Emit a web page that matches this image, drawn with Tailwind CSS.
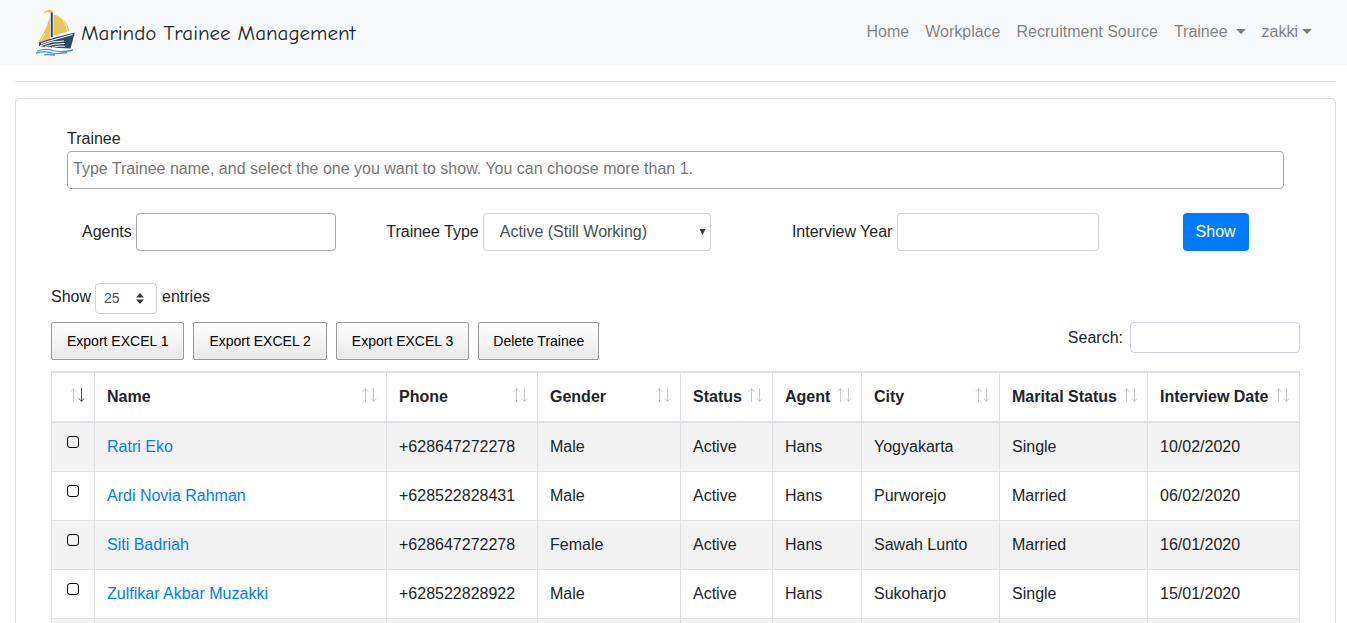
<!DOCTYPE html>
<html lang="en">
<head>
<meta charset="utf-8">
<meta name="viewport" content="width=device-width, initial-scale=1">
<title>Marindo Trainee Management</title>
<script src="https://cdn.jsdelivr.net/npm/@tailwindcss/browser@4"></script>
</head>
<body class="h-screen overflow-hidden bg-white font-['Liberation_Sans',Arial,sans-serif] text-base text-[#212529]">
<svg class="hidden" aria-hidden="true">
  <symbol id="sort" viewBox="0 0 15 20">
    <g fill="none" stroke="currentColor">
      <path stroke="#c6c8ca" d="M3.5 1.5V15M.8 4.6 3.5 1.6 6.2 4.6"/>
      <path d="M11.5 1V14.5M8.8 11.4 11.5 14.4 14.2 11.4"/>
    </g>
  </symbol>
</svg>

<nav class="flex h-[65px] items-center justify-between bg-[#f8f9fb] px-[35px]">
  <a href="#" class="flex items-center gap-[5px]">
    <svg class="h-[47px] w-[41px]" viewBox="0 0 41 47" aria-hidden="true">
      <path fill="#e8c65a" d="M15 5.500C14 14 9 23 3 34.500L15 31ZM18.500 5.500C27 7.500 33 13 34.500 22L18.500 27ZM8 5C9.500 2 12 .8 15.500 .5L19 3 15.500 4 12 2.800Z"/>
      <path fill="none" stroke="#f8f9fb" stroke-width=".8" d="M24 7.500C29 11 31.500 15 32.500 23M10 24 6 31.500"/>
      <path fill="#2f4a68" d="M15.800 3.500H17.800V28L15.800 28.500ZM4 33.500 20 28.500 39.800 23.500 35.500 39.500 14 38.500 4 37Z"/>
      <path fill="none" stroke="#f8f9fb" stroke-width="1.100" d="M6 34.500 18 31 37.500 25.500M5 36.800 17 33 29 32M10 37.500 20 35.200 30 34.500M17 38.500 23 37.200 30 37.200M3 39 16 38.500"/>
      <path fill="none" stroke="#4f8fcf" stroke-width="1.300" d="M2 42C8 40 13 40 18 41.500S30 43 38 41M1 44C7 42.500 12 42.500 17 44S26 44.500 32 43.500M9 46C12 45 16 45.500 20 46"/>
    </svg>
    <span class="font-['Comic_Sans_MS','Comic_Neue',Lato,sans-serif] text-[21px] leading-[30px]">Marindo Trainee Management</span>
  </a>
  <ul class="flex items-center gap-4 pb-[2px] text-black/50">
    <li><a href="#">Home</a></li>
    <li><a href="#">Workplace</a></li>
    <li><a href="#">Recruitment Source</a></li>
    <li><a href="#" class="flex items-center gap-2">Trainee <span class="border-x-5 border-t-5 border-x-transparent border-t-black/50"></span></a></li>
    <li><a href="#" class="flex items-center gap-1">zakki <span class="border-x-5 border-t-5 border-x-transparent border-t-black/50"></span></a></li>
  </ul>
</nav>

<main class="pt-4 pr-[11px] pl-[15px]">
  <hr class="mb-4 border-t border-black/10">
  <section class="rounded border border-[#dfdfdf] px-[35px] pt-7">
    <form class="px-4">
      <label for="trainee" class="block leading-6">Trainee</label>
      <input id="trainee" type="text" placeholder="Type Trainee name, and select the one you want to show. You can choose more than 1." class="block h-[38px] w-full rounded border border-[#aaa] px-[5px] pb-[2px] placeholder:text-[#777]">
      <div class="mt-6 grid grid-cols-12">
        <div class="col-span-3 flex items-center gap-1 pl-[15px]">
          <label for="agents">Agents</label>
          <input id="agents" type="text" class="h-[38px] w-[200px] rounded border border-[#aaa] px-2">
        </div>
        <div class="col-span-4 flex items-center gap-1 pl-[15px]">
          <label for="type">Trainee Type</label>
          <div class="relative">
            <select id="type" class="block h-[38px] w-[228px] appearance-none rounded border border-[#ced4da] bg-white pl-4 text-[#495057]">
              <option>Active (Still Working)</option>
            </select>
            <svg class="pointer-events-none absolute top-4 right-[5px] h-[6px] w-[7px]" viewBox="0 0 7 6" aria-hidden="true"><path fill="#343a40" d="M.5 0h6L3.500 6Z"/></svg>
          </div>
        </div>
        <div class="col-span-4 flex items-center gap-[5px] pl-[15px]">
          <label for="year">Interview Year</label>
          <input id="year" type="text" class="h-[38px] w-[202px] rounded border border-[#ced4da] px-3">
        </div>
        <div><button type="button" class="h-[38px] rounded bg-[#007bff] px-[13px] text-white">Show</button></div>
      </div>
    </form>

    <div class="mt-8 flex items-start leading-7">
      <label for="length" class="mr-1">Show</label>
      <div class="relative">
        <select id="length" class="block h-[31px] w-[62px] appearance-none rounded border border-[#ced4da] bg-white pb-[2px] pl-2 text-sm text-[#495057]">
          <option>25</option>
        </select>
        <svg class="pointer-events-none absolute top-[10px] right-[13px] h-[11px] w-2" viewBox="0 0 8 11" aria-hidden="true"><path fill="#343a40" d="M4 0 8 4.500H0ZM0 6.500H8L4 11Z"/></svg>
      </div>
      <span class="ml-[5px]">entries</span>
    </div>

    <div class="mt-2 flex items-start justify-between">
      <div class="flex gap-[9px] text-sm text-black">
        <button type="button" class="h-[38px] rounded-[2px] border border-[#999] bg-linear-to-b from-white to-[#e9e9e9] px-[15px]">Export EXCEL 1</button>
        <button type="button" class="h-[38px] rounded-[2px] border border-[#999] bg-linear-to-b from-white to-[#e9e9e9] px-[15px]">Export EXCEL 2</button>
        <button type="button" class="h-[38px] rounded-[2px] border border-[#999] bg-linear-to-b from-white to-[#e9e9e9] px-[15px]">Export EXCEL 3</button>
        <button type="button" class="h-[38px] rounded-[2px] border border-[#999] bg-linear-to-b from-white to-[#e9e9e9] px-[14px]">Delete Trainee</button>
      </div>
      <div class="flex items-center gap-[7px]">
        <label for="search">Search:</label>
        <input id="search" type="search" class="h-[31px] w-[170px] rounded border border-[#ced4da] px-2 text-sm">
      </div>
    </div>

    <table class="mt-[11px] w-full table-fixed border-separate border-spacing-0 border-t-2 border-l border-[#dee2e6] [&_td]:border-r [&_td]:border-b [&_td]:border-[#dee2e6] [&_td]:p-3 [&_th]:border-r [&_th]:border-b-2 [&_th]:border-[#dee2e6] [&_th]:py-3 [&_th]:pr-[9px] [&_th]:pl-3 [&_th]:text-left [&_th_svg]:h-5 [&_th_svg]:w-[15px] [&_th_svg]:shrink-0">
      <colgroup>
        <col class="w-[43px]"><col><col class="w-[151px]"><col class="w-[143px]"><col class="w-[92px]"><col class="w-[89px]"><col class="w-[138px]"><col class="w-[148px]"><col class="w-[152px]">
      </colgroup>
      <thead class="text-[#212529]">
        <tr>
          <th aria-label="Select"><div class="flex h-6 items-center justify-end"><svg class="text-[#3a5078]"><use href="#sort"/></svg></div></th>
          <th><div class="flex items-center justify-between">Name<svg class="text-[#c6c8ca]"><use href="#sort"/></svg></div></th>
          <th><div class="flex items-center justify-between">Phone<svg class="text-[#c6c8ca]"><use href="#sort"/></svg></div></th>
          <th><div class="flex items-center justify-between">Gender<svg class="text-[#c6c8ca]"><use href="#sort"/></svg></div></th>
          <th><div class="flex items-center justify-between">Status<svg class="text-[#c6c8ca]"><use href="#sort"/></svg></div></th>
          <th><div class="flex items-center justify-between">Agent<svg class="text-[#c6c8ca]"><use href="#sort"/></svg></div></th>
          <th><div class="flex items-center justify-between">City<svg class="text-[#c6c8ca]"><use href="#sort"/></svg></div></th>
          <th><div class="flex items-center justify-between whitespace-nowrap">Marital Status<svg class="text-[#c6c8ca]"><use href="#sort"/></svg></div></th>
          <th><div class="flex items-center justify-between whitespace-nowrap">Interview Date<svg class="text-[#c6c8ca]"><use href="#sort"/></svg></div></th>
        </tr>
      </thead>
      <tbody class="[&_a]:text-[#007bff] [&_input]:mt-px [&_input]:ml-[3px] [&_input]:block [&_input]:size-3 [&_input]:appearance-none [&_input]:rounded-[3px] [&_input]:border [&_input]:border-black">
        <tr class="odd:bg-[#f2f2f2]"><td class="align-top"><input type="checkbox" aria-label="Select Ratri Eko"></td><td><a href="#">Ratri Eko</a></td><td>+628647272278</td><td>Male</td><td>Active</td><td>Hans</td><td>Yogyakarta</td><td>Single</td><td>10/02/2020</td></tr>
        <tr class="odd:bg-[#f2f2f2]"><td class="align-top"><input type="checkbox" aria-label="Select Ardi Novia Rahman"></td><td><a href="#">Ardi Novia Rahman</a></td><td>+628522828431</td><td>Male</td><td>Active</td><td>Hans</td><td>Purworejo</td><td>Married</td><td>06/02/2020</td></tr>
        <tr class="odd:bg-[#f2f2f2]"><td class="align-top"><input type="checkbox" aria-label="Select Siti Badriah"></td><td><a href="#">Siti Badriah</a></td><td>+628647272278</td><td>Female</td><td>Active</td><td>Hans</td><td>Sawah Lunto</td><td>Married</td><td>16/01/2020</td></tr>
        <tr class="odd:bg-[#f2f2f2]"><td class="align-top"><input type="checkbox" aria-label="Select Zulfikar Akbar Muzakki"></td><td><a href="#">Zulfikar Akbar Muzakki</a></td><td>+628522828922</td><td>Male</td><td>Active</td><td>Hans</td><td>Sukoharjo</td><td>Single</td><td>15/01/2020</td></tr>
        <tr class="h-[49px] odd:bg-[#f2f2f2]"><td></td><td></td><td></td><td></td><td></td><td></td><td></td><td></td><td></td></tr>
      </tbody>
    </table>
  </section>
</main>
</body>
</html>
